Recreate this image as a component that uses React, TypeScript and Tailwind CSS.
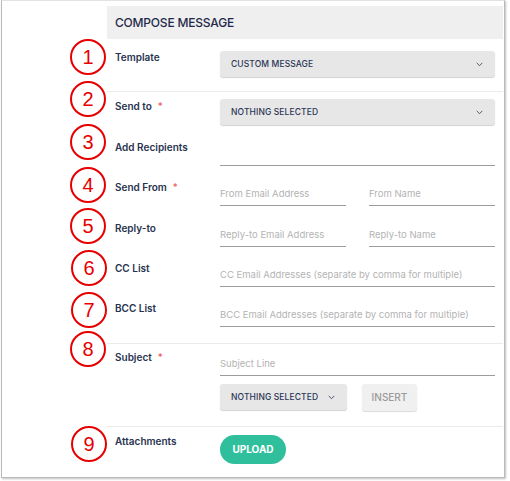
import React from 'react';

const markers = [
    { n: 1, cls: 'left-[70px] top-[39px]' },
    { n: 2, cls: 'left-[70px] top-[81px]' },
    { n: 3, cls: 'left-[70px] top-[124px]' },
    { n: 4, cls: 'left-[70px] top-[167px]' },
    { n: 5, cls: 'left-[70px] top-[208px]' },
    { n: 6, cls: 'left-[71px] top-[250px]' },
    { n: 7, cls: 'left-[71px] top-[292px]' },
    { n: 8, cls: 'left-[70px] top-[331px]' },
    { n: 9, cls: 'left-[71px] top-[426px]' },
];

const Chevron: React.FC = () => (
    <svg width="7" height="5" viewBox="0 0 7 5" fill="none">
        <path d="M1 1.2l2.5 2.5 2.5-2.5" stroke="#4a5571" strokeWidth="1" strokeLinecap="round" strokeLinejoin="round" />
    </svg>
);

const Select: React.FC<{ value: string; className?: string }> = ({ value, className = '' }) => (
    <div className={`h-[26px] flex items-center justify-between pl-[11px] pr-[12px] rounded-[3px] bg-[#e7e7e7] shadow-[0_1px_1px_rgba(0,0,0,0.18)] text-[8.5px] font-medium tracking-[0.1px] text-[#2b3656] ${className}`}>
        <span>{value}</span>
        <Chevron />
    </div>
);

const Field: React.FC<{ placeholder?: string; className?: string }> = ({ placeholder = '', className = '' }) => (
    <div className={`h-[26px] border-b border-[#9c9c9c] flex items-center pt-[3px] text-[9.5px] text-[#b3b3b3] ${className}`}>
        {placeholder}
    </div>
);

const Label: React.FC<{ text: string; required?: boolean }> = ({ text, required }) => (
    <div className="w-[105px] shrink-0 leading-[14px] text-[10px] font-semibold text-[#28334f]">
        {text}
        {required && <span className="ml-[6px] text-[#f05454] font-normal">*</span>}
    </div>
);

const Row: React.FC<{ label: string; required?: boolean; className?: string; children?: React.ReactNode }> = ({ label, required, className = '', children }) => (
    <div className={`flex items-start pl-[8px] ${className}`}>
        <Label text={label} required={required} />
        <div className="w-[275px]">{children}</div>
    </div>
);

const App: React.FC = () => {
    return (
        <div className="relative w-[510px] h-[481px] bg-white overflow-hidden" style={{ fontFamily: 'Inter, "Noto Sans", sans-serif' }}>
            <div className="ml-[1px] w-[504px] h-[478px] border border-[#b9b9b9] border-t-[#e2e2e2] shadow-[1px_1px_2px_rgba(0,0,0,0.25)] bg-white">
                <div className="ml-[105px] w-[396px]">
                    <div className="mt-[5px] h-[33px] bg-[#efefef] flex items-center pl-[8px] text-[12px] font-medium tracking-[-0.2px] text-[#1f2a4a]">
                        COMPOSE MESSAGE
                    </div>

                    <div className="h-[52px] pt-[11px]">
                        <Row label="Template">
                            <Select value="CUSTOM MESSAGE" className="mt-[1px]" />
                        </Row>
                    </div>

                    <div className="h-[252px] border-t border-[#ebebeb] pt-[7px]">
                        <Row label="Send to" required className="h-[41px]">
                            <Select value="NOTHING SELECTED" />
                        </Row>
                        <Row label="Add Recipients" className="h-[40px]">
                            <Field />
                        </Row>
                        <Row label="Send From" required className="h-[41px]">
                            <div className="flex gap-[23px]">
                                <Field placeholder="From Email Address" className="w-[126px]" />
                                <Field placeholder="From Name" className="w-[126px]" />
                            </div>
                        </Row>
                        <Row label="Reply-to" className="h-[40px]">
                            <div className="flex gap-[23px]">
                                <Field placeholder="Reply-to Email Address" className="w-[126px]" />
                                <Field placeholder="Reply-to Name" className="w-[126px]" />
                            </div>
                        </Row>
                        <Row label="CC List" className="h-[40px]">
                            <Field placeholder="CC Email Addresses (separate by comma for multiple)" />
                        </Row>
                        <Row label="BCC List">
                            <Field placeholder="BCC Email Addresses (separate by comma for multiple)" />
                        </Row>
                    </div>

                    <div className="h-[83px] border-t border-[#ebebeb] pt-[6px]">
                        <Row label="Subject" required>
                            <Field placeholder="Subject Line" />
                            <div className="flex items-start gap-[15px] mt-[8px]">
                                <Select value="NOTHING SELECTED" className="w-[127px]" />
                                <button className="h-[27px] w-[55px] rounded-[3px] bg-[#f0f0f0] shadow-[0_1px_1px_rgba(0,0,0,0.15)] text-[10px] font-medium text-[#9a9a9a]">
                                    INSERT
                                </button>
                            </div>
                        </Row>
                    </div>

                    <div className="border-t border-[#ebebeb] pt-[7px]">
                        <Row label="Attachments">
                            <button className="mt-[1px] h-[29px] w-[66px] rounded-full bg-[#2fbf9c] text-[10px] font-bold text-white">
                                UPLOAD
                            </button>
                        </Row>
                    </div>
                </div>
            </div>

            {markers.map(m => (
                <div
                    key={m.n}
                    className={`absolute ${m.cls} w-[36px] h-[36px] rounded-full border-2 border-[#e60000] flex items-center justify-center text-[20px] text-[#e60000]`}
                    style={{ fontFamily: '"Liberation Sans", Arial, sans-serif' }}
                >
                    {m.n}
                </div>
            ))}
        </div>
    );
};

export default App;
